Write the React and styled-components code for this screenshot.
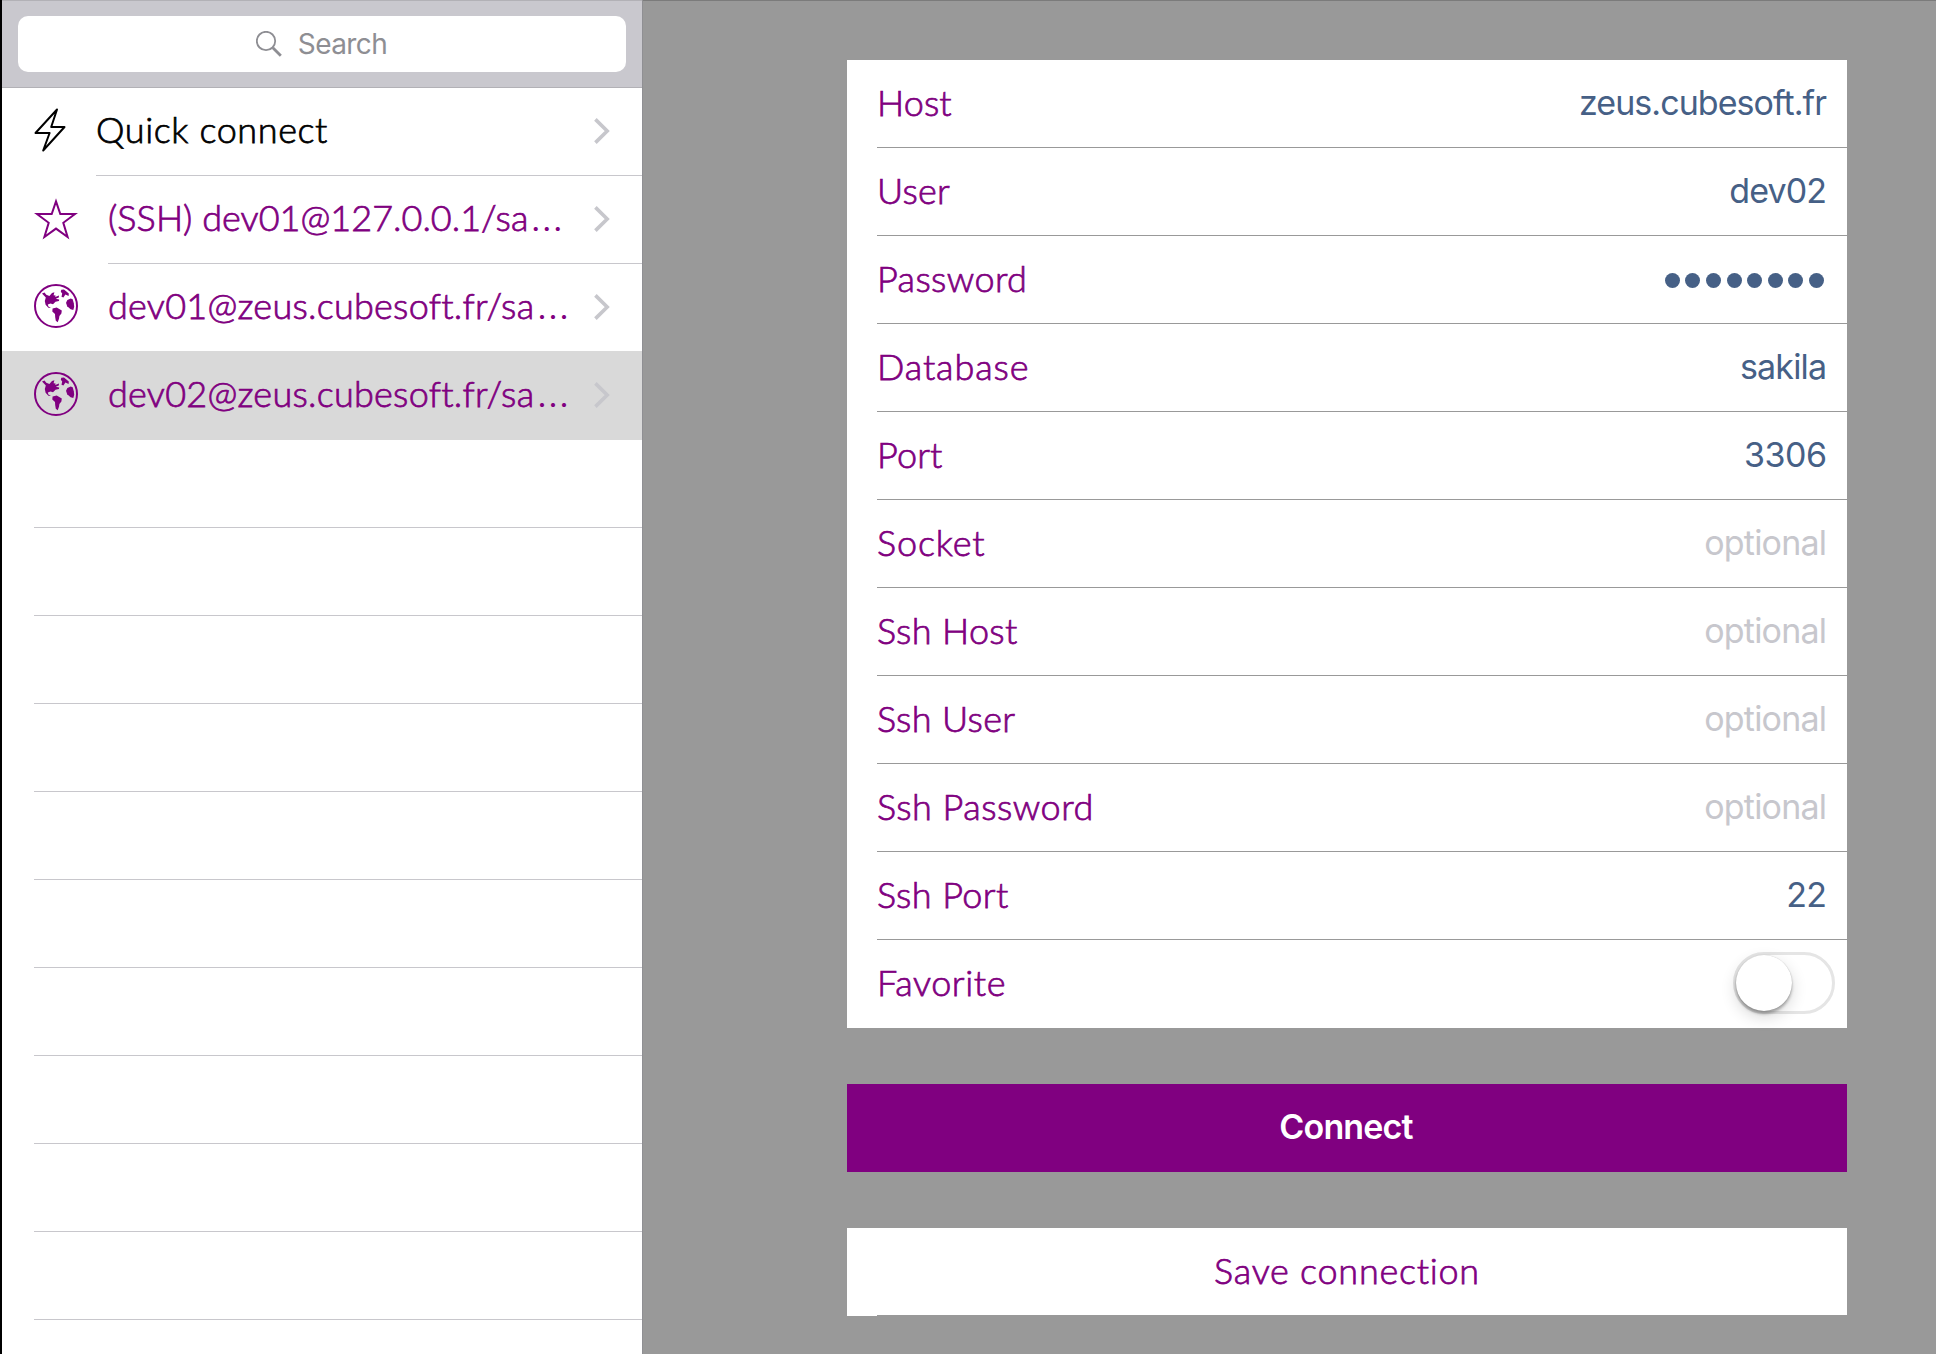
import React from "react";
import styled, { createGlobalStyle } from "styled-components";

const PURPLE = "#800080";

const GlobalStyle = createGlobalStyle`
  *, *::before, *::after { box-sizing: border-box; }
  body { margin: 0; background: #999999; overflow: hidden; }
`;

const Screen = styled.div`
  display: flex;
  width: 1936px;
  height: 1354px;
  overflow: hidden;
  font-family: Inter, "Liberation Sans", sans-serif;
`;

const Sidebar = styled.aside`
  flex: none;
  display: flex;
  flex-direction: column;
  width: 643px;
  background: #ffffff;
  border-left: 2px solid #000000;
  border-right: 1px solid #8f8f93;
`;

const SearchBar = styled.div`
  flex: none;
  height: 88px;
  padding: 15px 16px;
  background: #c9c8ce;
  border-top: 1px solid #b2b1b6;
  border-bottom: 1px solid #b2b1b6;
`;

const SearchField = styled.div`
  display: flex;
  align-items: center;
  justify-content: center;
  gap: 16px;
  height: 56px;
  padding-right: 1px;
  border-radius: 10px;
  background: #ffffff;
  color: #8e8e93;
  font-size: 28px;
  letter-spacing: ${(p) => p.$track}px;
`;

const List = styled.ul`
  margin: 0;
  padding: 0;
  list-style: none;
`;

const Item = styled.li`
  display: flex;
  align-items: stretch;
  height: ${(p) => (p.$selected ? 89 : 88)}px;
  margin-top: ${(p) => (p.$selected ? -1 : 0)}px;
  padding-left: 32px;
  padding-top: ${(p) => (p.$selected ? 1 : 0)}px;
  background: ${(p) => (p.$selected ? "#d9d9d9" : "transparent")};
  color: ${(p) => p.$color || PURPLE};
`;

const IconSlot = styled.div`
  flex: none;
  display: flex;
  align-items: center;
  width: ${(p) => p.$width}px;
  padding-bottom: ${(p) => p.$lift || 0}px;
`;

const ItemBody = styled.div`
  flex: 1;
  display: flex;
  align-items: center;
  justify-content: space-between;
  padding: 0 32px 1px 0;
  border-bottom: 1px solid ${(p) => (p.$line ? "#c8c7cc" : "transparent")};
`;

const HumanistText = styled.span`
  font-family: Lato, "Liberation Sans", sans-serif;
  font-size: 36px;
  font-weight: 300;
  line-height: 44px;
  white-space: nowrap;
  -webkit-text-stroke: 0.75px currentColor;
  letter-spacing: ${(p) => p.$track}px;
`;

const ItemText = styled(HumanistText)`
  height: 48px;
`;

const Ellipsis = styled.span`
  margin-left: 2px;
  font-family: Inter, "Liberation Sans", sans-serif;
  font-size: 39px;
  font-weight: 300;
  line-height: 1;
  -webkit-text-stroke: 0;
`;

const EmptyItem = styled.li`
  height: 88px;
  margin-left: 32px;
  border-bottom: 1px solid #c8c7cc;
`;

const Detail = styled.main`
  flex: 1;
  display: flex;
  flex-direction: column;
  gap: 56px;
  padding: 59px 89px 0 204px;
  background: #999999;
  border-top: 1px solid #7b7b7b;
`;

const Card = styled.section`
  background: #ffffff;
`;

const Field = styled.div`
  height: 88px;
  padding-left: 30px;
`;

const FieldBody = styled.div`
  display: flex;
  align-items: center;
  justify-content: space-between;
  height: 88px;
  padding-right: ${(p) => (p.$toggle ? 12 : 20)}px;
  border-bottom: 1px solid ${(p) => (p.$last ? "transparent" : "#999999")};
`;

const Label = styled(HumanistText)`
  padding-bottom: 3px;
  color: ${PURPLE};
`;

const Value = styled.span`
  padding-bottom: 2px;
  margin-right: ${(p) => -p.$track}px;
  color: ${(p) => (p.$placeholder ? "#c7c7cd" : "#466086")};
  font-size: 34px;
  line-height: 42px;
  white-space: nowrap;
  letter-spacing: ${(p) => p.$track}px;
`;

const Dots = styled.div`
  display: flex;
  gap: 5.6px;
  padding: 2px 3px 0 0;
`;

const Dot = styled.i`
  width: 15px;
  height: 15px;
  border-radius: 50%;
  background: #466086;
`;

const Switch = styled.div`
  width: 102px;
  height: 62px;
  margin-bottom: 2px;
  border: 3px solid #e5e5e5;
  border-radius: 31px;
`;

const Knob = styled.div`
  width: 56px;
  height: 56px;
  border-radius: 50%;
  background: #ffffff;
  box-shadow: 0 6px 16px rgba(0, 0, 0, 0.16), 0 3px 3px rgba(0, 0, 0, 0.28),
    0 0 1px rgba(0, 0, 0, 0.25);
`;

const ConnectButton = styled.div`
  display: flex;
  align-items: center;
  justify-content: center;
  height: 88px;
  padding: 0 2px 3px 0;
  background: ${PURPLE};
  color: #ffffff;
  font-size: 34px;
  font-weight: 600;
  letter-spacing: ${(p) => p.$track}px;
`;

function SearchIcon() {
  return (
    <svg width="26" height="26" viewBox="0 0 26 26" fill="none" stroke="#8e8e93">
      <circle cx="10" cy="10" r="9.2" strokeWidth="1.8" />
      <path d="M16.8 16.8 L24.8 24.8" strokeWidth="2.8" />
    </svg>
  );
}

function BoltIcon() {
  return (
    <svg width="32" height="44" viewBox="0 0 32 44" fill="none" stroke="#000" strokeWidth="2">
      <path d="M23 1.5 L1.5 25 H15.6 L9.2 42.5 L30.5 19 H17.2 Z" strokeLinejoin="round" />
    </svg>
  );
}

function StarIcon() {
  return (
    <svg width="44" height="42" viewBox="0 0 44 42" fill="none" stroke={PURPLE} strokeWidth="2">
      <path d="M22 3.4 L26.3 16 H41 L29.3 24.8 L33.6 39 L22 30.6 L10.4 39 L14.7 24.8 L3 16 H17.7 Z" />
    </svg>
  );
}

function GlobeIcon() {
  return (
    <svg width="44" height="44" viewBox="0 0 44 44">
      <circle cx="22" cy="22" r="21" fill="none" stroke={PURPLE} strokeWidth="2" />
      <g fill={PURPLE}>
        <path d="M8 9.6 L10.5 8.4 L12.3 10.8 L15.4 12 L18 8.9 L20.4 8.2 L19.6 11.2 L21.6 11.6 L21.2 13 L25 11.6 L24.8 13.6 L21.8 14.8 L25.2 15.4 L25 17 L21.5 17.8 L19 20.2 L16.5 19.4 L13.8 20.4 L14.4 22.4 L17 24 L14.4 23.8 L11.6 20.8 L10.8 17 L11.8 13.6 Z" />
        <path d="M18.6 24.4 L22.7 23.6 L27.8 26.4 L27.4 29.4 L25.4 32 L25 34.8 L23.7 38.2 L21.8 36.8 L21.2 33.2 L21 30 L18.3 27.4 Z" />
        <path d="M27.3 5.8 L30 5.6 L34.8 9.4 L34.6 12 L31.4 10.4 L29.4 13.4 L27.5 12.7 L28.2 9.4 L26.8 7.8 Z" />
        <path d="M36.7 14.6 L38.7 15.3 L39.8 19.3 L40.2 22.7 L39.3 26 L36.6 25.3 L33.2 22.2 L32 18.7 L33.4 16 Z" />
      </g>
    </svg>
  );
}

function Chevron() {
  return (
    <svg width="16" height="26" viewBox="0 0 16 26" fill="none" stroke="#c7c7cc" strokeWidth="3.6">
      <path d="M1.4 1.4 L13.2 13 L1.4 24.6" />
    </svg>
  );
}

const connections = [
  { text: "Quick connect", Icon: BoltIcon, slot: 62, lift: 4, color: "#000", line: true, track: 0.6 },
  { text: "(SSH) dev01@127.0.0.1/sa", cut: true, Icon: StarIcon, slot: 74, lift: 2, line: true, track: 0.03 },
  { text: "dev01@zeus.cubesoft.fr/sa", cut: true, Icon: GlobeIcon, slot: 74, lift: 4, track: 0.26 },
  { text: "dev02@zeus.cubesoft.fr/sa", cut: true, Icon: GlobeIcon, slot: 74, lift: 4, selected: true, track: 0.26 },
];

const fields = [
  { label: "Host", lt: 0.1, value: "zeus.cubesoft.fr", vt: -0.94 },
  { label: "User", lt: 0.2, value: "dev02", vt: -0.9 },
  { label: "Password", lt: 0.38, secret: 8 },
  { label: "Database", lt: 0.9, value: "sakila", vt: -0.85 },
  { label: "Port", lt: 0.2, value: "3306", vt: -0.5 },
  { label: "Socket", lt: 0.9 },
  { label: "Ssh Host", lt: 0.35 },
  { label: "Ssh User", lt: 0.35 },
  { label: "Ssh Password", lt: 0.5 },
  { label: "Ssh Port", lt: 0.4, value: "22", vt: -0.6 },
  { label: "Favorite", lt: 0.6, toggle: true },
];

function FieldValue({ field }) {
  if (field.toggle) {
    return (
      <Switch>
        <Knob />
      </Switch>
    );
  }
  if (field.secret) {
    return (
      <Dots>
        {Array.from({ length: field.secret }, (_, i) => (
          <Dot key={i} />
        ))}
      </Dots>
    );
  }
  if (field.value) return <Value $track={field.vt}>{field.value}</Value>;
  return (
    <Value $placeholder $track={-0.8}>
      optional
    </Value>
  );
}

const SaveButton = styled(FieldBody)`
  justify-content: center;
  padding-right: 30px;
`;

export default function App() {
  return (
    <Screen>
      <GlobalStyle />
      <Sidebar>
        <SearchBar>
          <SearchField $track={-0.6}>
            <SearchIcon />
            <span>Search</span>
          </SearchField>
        </SearchBar>
        <List>
          {connections.map(({ text, cut, Icon, slot, lift, color, line, selected, track }) => (
            <Item key={text} $selected={selected} $color={color}>
              <IconSlot $width={slot} $lift={lift}>
                <Icon />
              </IconSlot>
              <ItemBody $line={line}>
                <ItemText $track={track}>
                  {text}
                  {cut && <Ellipsis>…</Ellipsis>}
                </ItemText>
                <Chevron />
              </ItemBody>
            </Item>
          ))}
          {Array.from({ length: 11 }, (_, i) => (
            <EmptyItem key={i} />
          ))}
        </List>
      </Sidebar>
      <Detail>
        <Card>
          {fields.map((field, i) => (
            <Field key={field.label}>
              <FieldBody $last={i === fields.length - 1} $toggle={field.toggle}>
                <Label $track={field.lt}>{field.label}</Label>
                <FieldValue field={field} />
              </FieldBody>
            </Field>
          ))}
        </Card>
        <ConnectButton $track={-0.85}>Connect</ConnectButton>
        <Card>
          <Field>
            <SaveButton>
              <Label $track={0.75}>Save connection</Label>
            </SaveButton>
          </Field>
        </Card>
      </Detail>
    </Screen>
  );
}
